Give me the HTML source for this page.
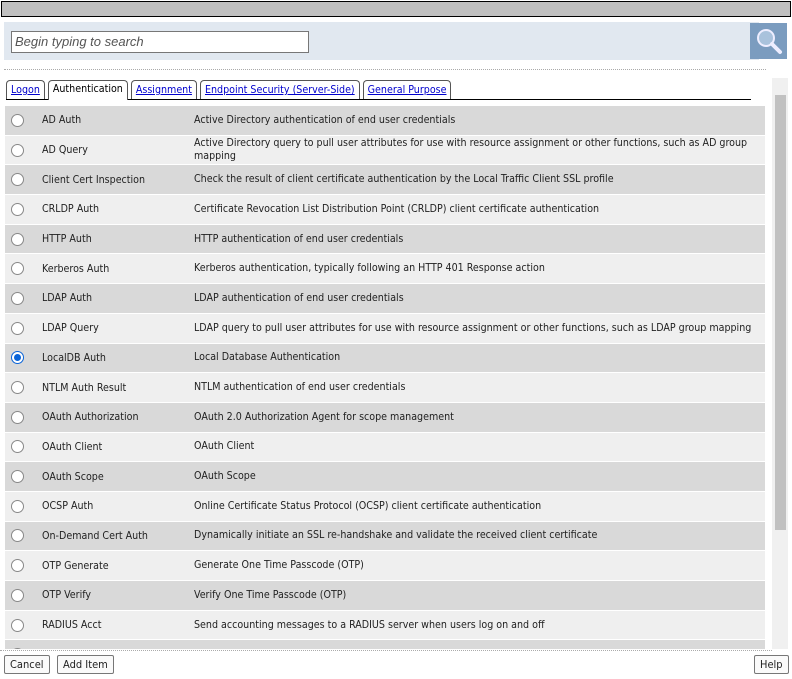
<!DOCTYPE html>
<html><head><style>
*{box-sizing:border-box;margin:0;padding:0}
body{width:792px;height:679px;background:#fff;font-family:"DejaVu Sans Condensed","Liberation Sans",sans-serif;font-size:10.6px;color:#222;position:relative;overflow:hidden}
.top{position:absolute;left:1px;top:1px;width:790px;height:16px;background:#c0c0c0;border:1px solid #000}
.sp{position:absolute;left:4px;top:22px;width:755px;height:38px;background:#e1e8f0}
.inp{position:absolute;left:11px;top:31px;width:298px;height:22px;background:#fff;border:1px solid #777;font-style:italic;font-size:13px;color:#555;padding:2px 3px;font-family:"Liberation Sans",sans-serif}
.sb{position:absolute;left:750px;top:23px;width:37px;height:36px;background:#7b9cbf}
.dot{position:absolute;left:4px;top:69px;width:762px;border-top:1px dotted #aaa}
.tabs{position:absolute;left:6px;top:80px;width:745px;height:20px;border-bottom:1px solid #000;display:flex;gap:3px}
.tab{border:1px solid #555;border-bottom:none;border-radius:4px 4px 0 0;padding:3px 4px 0;color:#00c;text-decoration:underline;height:19px;font-size:10.6px}
.tab.a{color:#000;text-decoration:none;background:#fff;height:20px;padding-top:2px}
.list{position:absolute;left:5px;top:106px;width:760px;height:543px;overflow:hidden}
.r{height:28.7px;margin-bottom:1px;display:flex;align-items:center;position:relative}
.r:nth-child(odd){background:#d9d9d9}.r:nth-child(even){background:#efefef}
.rad{position:absolute;left:6px;width:13px;height:13px;border-radius:50%;border:1px solid #888;background:#fff}
.rad.on{border-color:#0a64d8}.rad.on:after{content:"";position:absolute;left:2px;top:2px;width:7px;height:7px;border-radius:50%;background:#0a64d8}
.n{position:absolute;left:37px}
.d{position:absolute;left:189px;width:568px;line-height:13px}
.scr{position:absolute;left:772px;top:78px;width:16px;height:571px;background:#f0f0f0}
.th{position:absolute;left:775px;top:95px;width:11px;height:435px;background:#c1c1c1}
.btn{position:absolute;top:655px;height:19px;border:1px solid #777;border-radius:2px;background:#fafafa;padding:2px 5px;font-size:11px}
</style></head><body>
<div class="top"></div>
<div class="sp"></div>
<div class="inp">Begin typing to search</div>
<div class="sb"><svg width="37" height="36"><circle cx="16" cy="15" r="8" fill="#a9c2dc" stroke="#eef" stroke-width="2"/><line x1="22" y1="21" x2="30" y2="29" stroke="#eef" stroke-width="4" stroke-linecap="round"/></svg></div>
<div class="dot"></div>
<div class="tabs"><span class="tab">Logon</span><span class="tab a">Authentication</span><span class="tab">Assignment</span><span class="tab">Endpoint Security (Server-Side)</span><span class="tab">General Purpose</span></div>
<div class="list">
<div class="r"><span class="rad"></span><span class="n">AD Auth</span><span class="d">Active Directory authentication of end user credentials</span></div>
<div class="r"><span class="rad"></span><span class="n">AD Query</span><span class="d">Active Directory query to pull user attributes for use with resource assignment or other functions, such as AD group<br>mapping</span></div>
<div class="r"><span class="rad"></span><span class="n">Client Cert Inspection</span><span class="d">Check the result of client certificate authentication by the Local Traffic Client SSL profile</span></div>
<div class="r"><span class="rad"></span><span class="n">CRLDP Auth</span><span class="d">Certificate Revocation List Distribution Point (CRLDP) client certificate authentication</span></div>
<div class="r"><span class="rad"></span><span class="n">HTTP Auth</span><span class="d">HTTP authentication of end user credentials</span></div>
<div class="r"><span class="rad"></span><span class="n">Kerberos Auth</span><span class="d">Kerberos authentication, typically following an HTTP 401 Response action</span></div>
<div class="r"><span class="rad"></span><span class="n">LDAP Auth</span><span class="d">LDAP authentication of end user credentials</span></div>
<div class="r"><span class="rad"></span><span class="n">LDAP Query</span><span class="d" style="white-space:nowrap">LDAP query to pull user attributes for use with resource assignment or other functions, such as LDAP group mapping</span></div>
<div class="r"><span class="rad on"></span><span class="n">LocalDB Auth</span><span class="d">Local Database Authentication</span></div>
<div class="r"><span class="rad"></span><span class="n">NTLM Auth Result</span><span class="d">NTLM authentication of end user credentials</span></div>
<div class="r"><span class="rad"></span><span class="n">OAuth Authorization</span><span class="d">OAuth 2.0 Authorization Agent for scope management</span></div>
<div class="r"><span class="rad"></span><span class="n">OAuth Client</span><span class="d">OAuth Client</span></div>
<div class="r"><span class="rad"></span><span class="n">OAuth Scope</span><span class="d">OAuth Scope</span></div>
<div class="r"><span class="rad"></span><span class="n">OCSP Auth</span><span class="d">Online Certificate Status Protocol (OCSP) client certificate authentication</span></div>
<div class="r"><span class="rad"></span><span class="n">On-Demand Cert Auth</span><span class="d">Dynamically initiate an SSL re-handshake and validate the received client certificate</span></div>
<div class="r"><span class="rad"></span><span class="n">OTP Generate</span><span class="d">Generate One Time Passcode (OTP)</span></div>
<div class="r"><span class="rad"></span><span class="n">OTP Verify</span><span class="d">Verify One Time Passcode (OTP)</span></div>
<div class="r"><span class="rad"></span><span class="n">RADIUS Acct</span><span class="d">Send accounting messages to a RADIUS server when users log on and off</span></div>
<div class="r"><span class="rad"></span><span class="n">RADIUS Auth</span><span class="d">RADIUS authentication</span></div>
</div>
<div class="scr"></div><div class="th"></div>
<div style="position:absolute;left:0;top:650px;width:772px;border-top:1px dotted #aaa"></div>
<div class="btn" style="left:4px">Cancel</div>
<div class="btn" style="left:57px">Add Item</div>
<div class="btn" style="left:754px">Help</div>
</body></html>
